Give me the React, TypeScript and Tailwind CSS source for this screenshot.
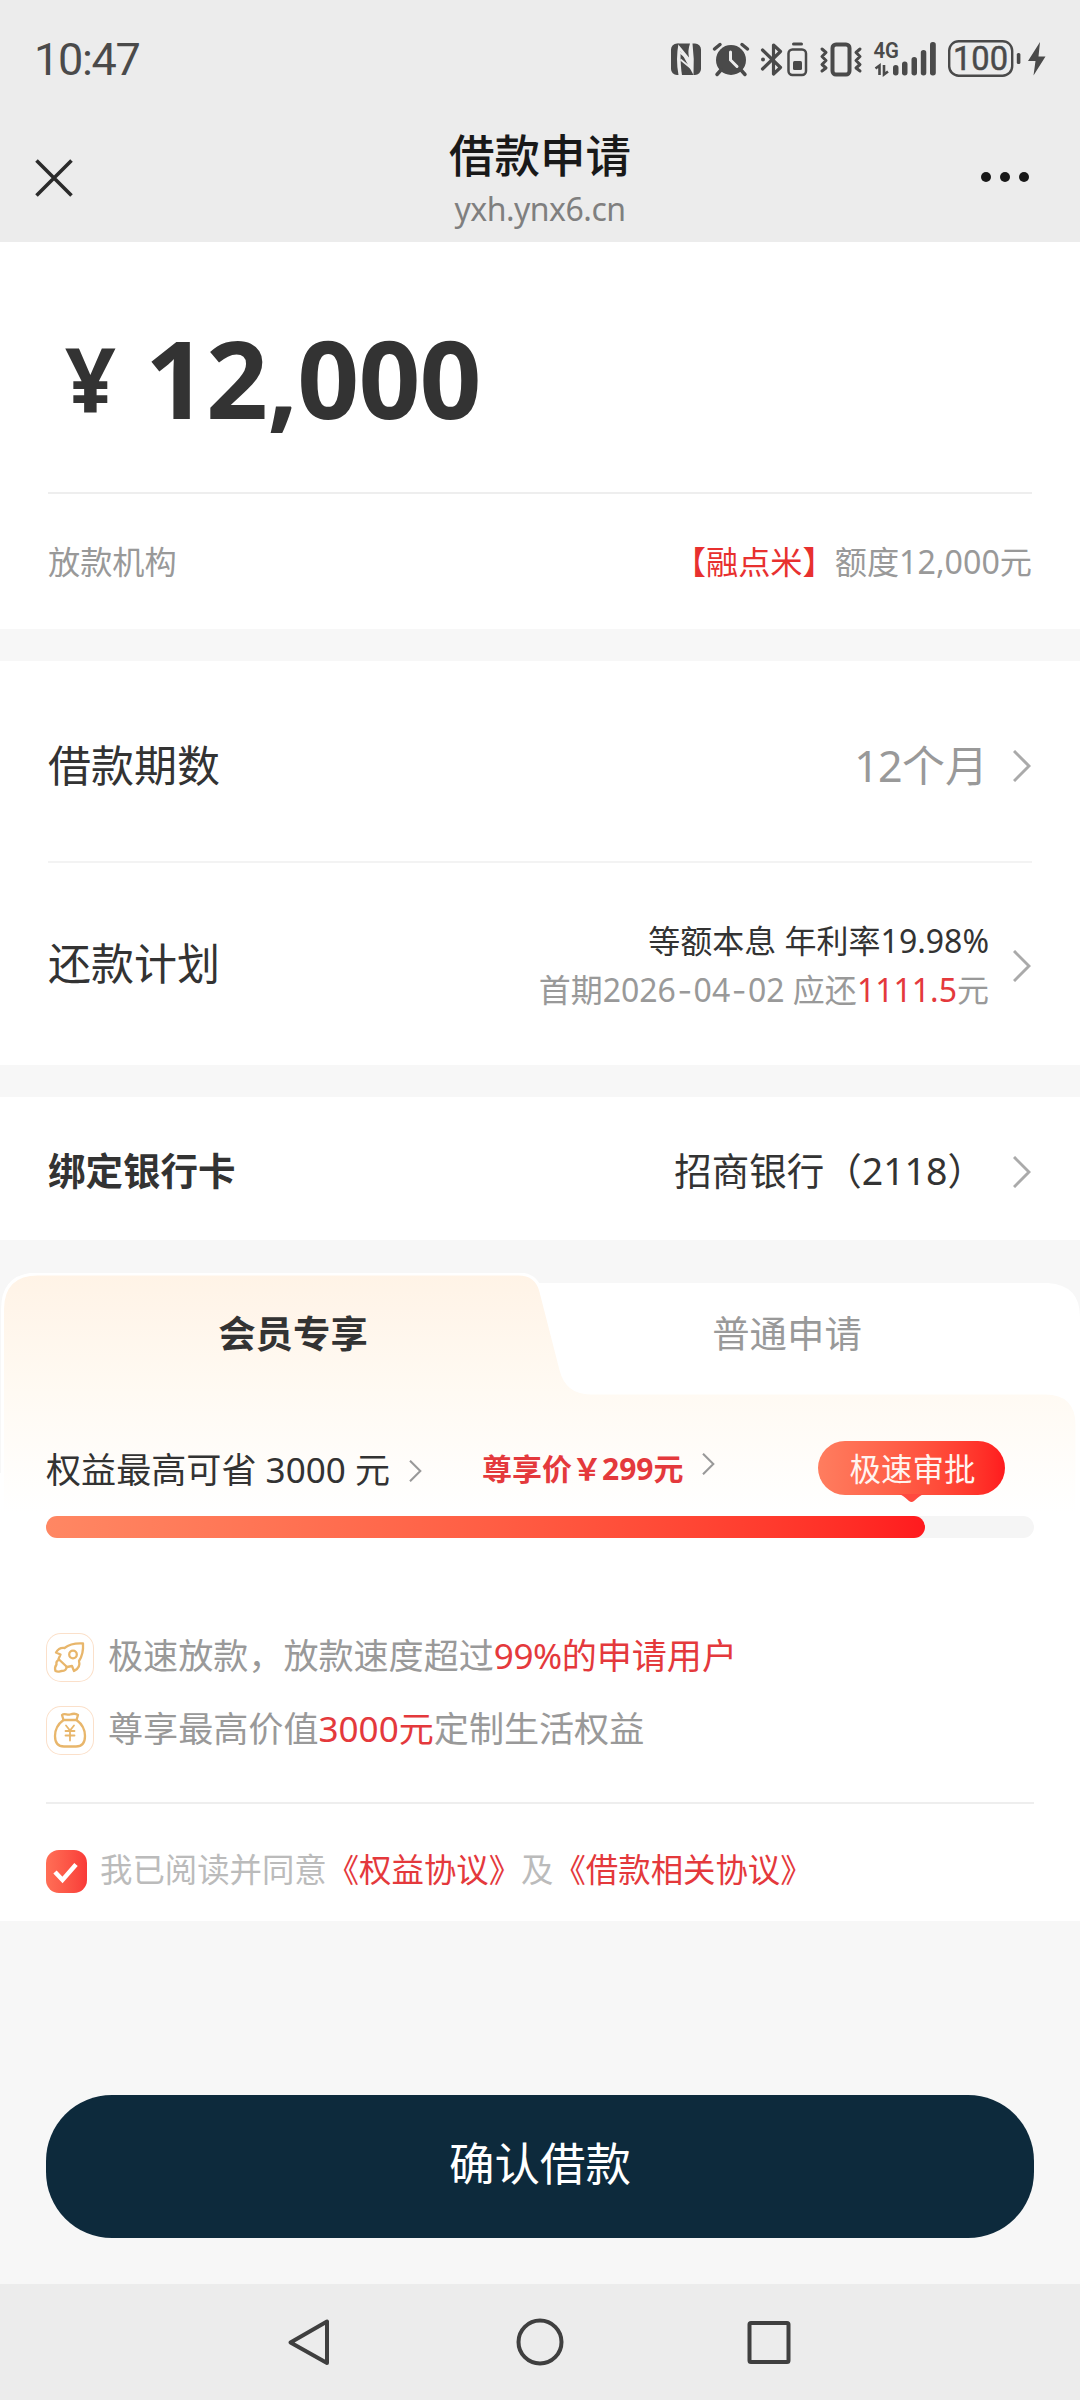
import React, { useState } from 'react';

const SANS =
  "font-['Noto_Sans','Noto_Sans_CJK_SC',sans-serif]";

interface ChevronProps {
  className: string;
  stroke?: number;
}

function Chevron({ className, stroke = 3 }: ChevronProps) {
  return (
    <svg viewBox="0 0 18 32" className={className} fill="none" stroke="currentColor" strokeWidth={stroke}>
      <path d="M1 1 L16 16 L1 31" />
    </svg>
  );
}

function Dash() {
  return <span className="px-[1.500px] font-[Inter]">-</span>;
}

function StatusIcons() {
  return (
    <svg width="380" height="44" viewBox="668 36 380 44" fill="#4a4a4a">
      {/* NFC */}
      <path d="M677 42.500h1.500q-3 16 0 31.500h-1.500a6 6 0 0 1-6-6v-19.500a6 6 0 0 1 6-6z" />
      <path d="M677.500 42.500h12.500q-2.500 7-1 14z" />
      <path d="M680.500 50q0 16 1.500 24h11.500z" />
      <path d="M692.500 42.500h2.500a6 6 0 0 1 6 6v19.500a6 6 0 0 1-6 6h-1.500q1-16-1-31.500z" />
      <path d="M679.500 51l12 10M680.500 58.500l11 9" stroke="#ececec" strokeWidth="1.800" />

      {/* alarm */}
      <circle cx="731" cy="59" r="15" />
      <path d="M714.500 48l5.500-4.500M747.500 48l-5.500-4.500M721 69l-4 4.500M741 69l4 4.500" stroke="#4a4a4a" strokeWidth="3.500" strokeLinecap="round" />
      <path d="M730.500 51v8l6.500 6.500" fill="none" stroke="#ececec" strokeWidth="3" strokeLinecap="round" />

      {/* bluetooth and its battery */}
      <path d="M762.500 49l18 17.500-7 6.500v-29l7 6.500-18 17.500" fill="none" stroke="#4a4a4a" strokeWidth="3.200" strokeLinejoin="round" strokeLinecap="round" />
      <circle cx="763" cy="58.500" r="2" />
      <rect x="788.500" y="48.500" width="17.500" height="25.500" rx="4" fill="none" stroke="#4a4a4a" strokeWidth="2.500" />
      <rect x="792" y="41.500" width="11" height="3" rx="1.500" />
      <rect x="793" y="60" width="9" height="9" rx="1.500" />

      {/* vibrate */}
      <rect x="832.500" y="43.500" width="17" height="30" rx="3.500" fill="none" stroke="#4a4a4a" strokeWidth="4" />
      <path d="M822 48l4 3.500-4 4 4 4-4 4 4 3.500-4 3M860 48l-4 3.500 4 4-4 4 4 4-4 3.500 4 3" fill="none" stroke="#4a4a4a" strokeWidth="3" strokeLinecap="round" strokeLinejoin="round" />

      {/* mobile signal */}
      <text x="873.500" y="57" fontSize="22" fontWeight="600" fontFamily="Roboto, sans-serif" textLength="25.500" lengthAdjust="spacingAndGlyphs">4G</text>
      <path d="M875.500 67.500l4-3v9.500M884 64v9.500l4-3" fill="none" stroke="#4a4a4a" strokeWidth="2.600" />
      <rect x="893" y="64" width="5.500" height="10.500" rx="2.700" />
      <rect x="902" y="60.500" width="5.500" height="14" rx="2.700" />
      <rect x="911.500" y="56" width="5.500" height="18.500" rx="2.700" />
      <rect x="920.800" y="49" width="5.500" height="25.500" rx="2.700" />
      <rect x="930" y="41" width="5.800" height="33.500" rx="2.700" />

      {/* battery */}
      <rect x="949.200" y="40.200" width="63" height="34.500" rx="9.500" fill="none" stroke="#4a4a4a" strokeWidth="2.400" />
      <text x="953" y="69" fontSize="32.500" fontWeight="400" fontFamily="Roboto, sans-serif" stroke="#4a4a4a" strokeWidth="0.500" textLength="55" lengthAdjust="spacingAndGlyphs">100</text>
      <rect x="1016.800" y="52" width="3.600" height="11" rx="1.500" />
      <path d="M1040 41l-12 19h7.500l-2 14.500 12-19h-7z" />
    </svg>
  );
}

function RocketIcon() {
  return (
    <svg viewBox="0 0 48 49" className="h-[49px] w-12" fill="none" stroke="#e8b66b" strokeWidth="2.300" strokeLinejoin="round" strokeLinecap="round">
      <path d="M37 10.500c-8-.5-14 1-18.500 4.500-3.500-.5-6.500 1-8.500 4.500l4.500 2-2 4.500 8.500 8 5-1 2 5c4-2 6.500-5 5-10 3-4.500 4.500-10 4-17.500z" />
      <circle cx="27" cy="21.500" r="3.800" />
      <path d="M12.500 27c-3 1.500-2 3-2 4.500-1.500 2-2 4-1 6.500 3 1.500 4.500 0 6 0 2.500 0 5-.5 5-4" />
    </svg>
  );
}

function MoneyBagIcon() {
  return (
    <svg viewBox="0 0 48 49" className="h-[49px] w-12" fill="none" stroke="#e8b66b" strokeWidth="2.300" strokeLinejoin="round" strokeLinecap="round">
      <path d="M17.500 14l-1.500-5c2.500-2.500 5 .5 8-.5s5.500-1.500 8 .5l-1.500 5z" />
      <path d="M17.500 14c-5.500 4-8.500 10-8.500 16 0 7 3 10.500 9 10.500h12c6 0 9-3.500 9-10.500 0-6-3-12-8.500-16" />
      <path d="M20 19.500l4 5 4-5M19.500 25h9M19.500 29.500h9M24 25v9.500" strokeWidth="1.800" />
    </svg>
  );
}

export default function App() {
  const [agreed, setAgreed] = useState(true);

  return (
    <div className={`flex h-[2400px] w-[1080px] flex-col overflow-hidden bg-[#f7f7f7] text-[#333] ${SANS}`}>
      {/* HEADER */}
      <header className="flex h-[242px] flex-col bg-[#ececec]">
        <div className="flex h-[118px] items-center justify-between pl-[34px] pr-[32px]">
          <span className="font-[Roboto] text-[45px] leading-none tracking-[-1.300px] text-[#4a4a4a]">10:47</span>
          <StatusIcons />
        </div>
        <div className="grid flex-1 grid-cols-[200px_1fr_200px]">
          <button className="flex pl-[35px] pt-[41px]">
            <svg width="38" height="38" viewBox="0 0 38 38" fill="none" stroke="#2b2b2b" strokeWidth="3.600">
              <path d="M1.500 1.500l35 35M36.500 1.500l-35 35" />
            </svg>
          </button>
          <div className="flex flex-col items-center pt-[13px]">
            <h1 className="text-[45.500px] font-medium leading-[48px] text-[#191919]">借款申请</h1>
            <span className="mt-2 text-[32px] leading-[44px] tracking-[-0.500px] text-[#7f7f7f]">yxh.ynx6.cn</span>
          </div>
          <button className="flex justify-end gap-[9px] pr-[51px] pt-[54px]">
            <i className="size-[10px] rounded-full bg-[#191919]" />
            <i className="size-[10px] rounded-full bg-[#191919]" />
            <i className="size-[10px] rounded-full bg-[#191919]" />
          </button>
        </div>
      </header>

      {/* AMOUNT */}
      <section className="h-[387px] bg-white px-12">
        <div className="flex h-[252px] items-start border-b-2 border-[#eee] pl-[17px] pt-[66px] font-bold leading-[138px]">
          <span className="pt-[2px] text-[89px]">¥</span>
          <span className="ml-[29px] text-[108.500px] tracking-[-0.900px]">12,000</span>
        </div>
        <div className="flex h-[135px] items-center justify-between pt-[2px] text-[32.200px] text-[#999]">
          <span>放款机构</span>
          <span>
            <span className="text-[#e8302f]">【融点米】</span>额度12,000元
          </span>
        </div>
      </section>

      {/* TERMS */}
      <section className="mt-8 h-[404px] bg-white px-12">
        <div className="flex h-[202px] items-center border-b-2 border-[#f3f3f3] pt-[10px]">
          <span className="flex-1 text-[43px]">借款期数</span>
          <span className="text-[43px] text-[#999]">
            <span className="tracking-[-0.700px]">12</span>个月
          </span>
          <Chevron className="ml-[25px] mr-px h-8 w-[18px] text-[#aaa]" />
        </div>
        <div className="flex h-[202px] items-center pt-1">
          <span className="-mt-[3px] flex-1 text-[43px]">还款计划</span>
          <div className="-mt-[2px] text-right text-[32px] leading-[49px]">
            <p>等额本息 年利率19.98%</p>
            <p className="text-[#999]">
              首期2026<Dash />04<Dash />02 应还<span className="text-[#e4393c]">1111.5</span>元
            </p>
          </div>
          <Chevron className="ml-[24px] mr-px h-8 w-[18px] text-[#aaa]" />
        </div>
      </section>

      {/* BANK CARD */}
      <section className="mt-8 flex h-[143px] items-center bg-white px-12 pt-[6px]">
        <span className="flex-1 text-[37.500px] font-bold">绑定银行卡</span>
        <span className="text-[37.500px]">招商银行（2118）</span>
        <Chevron className="ml-[28px] mr-px h-8 w-[18px] text-[#aaa]" />
      </section>

      {/* MEMBERSHIP */}
      <section className="relative mt-[33px] h-[648px]">
        <svg className="absolute inset-0" width="1080" height="648" viewBox="0 0 1080 648">
          <defs>
            <linearGradient id="cream" x1="0" y1="0" x2="0" y2="240" gradientUnits="userSpaceOnUse">
              <stop offset="0" stopColor="#fff3e6" />
              <stop offset="0.5" stopColor="#fffaf3" />
              <stop offset="1" stopColor="#fff" />
            </linearGradient>
          </defs>
          <path d="M500 10H1048Q1080 12 1080 44V648H0V200H500Z" fill="#fff" />
          <path
            d="M2.500 648V36Q3 1 38 1H518Q537 1 541 19L561 97Q567 120 590 120H1045Q1077 120 1077 152V648Z"
            fill="url(#cream)"
            stroke="#fff"
            strokeWidth="3"
          />
        </svg>

        <div className="relative flex h-[120px] text-[37.400px]">
          <span className="w-[586px] text-center font-bold leading-[122px]">会员专享</span>
          <span className="w-[402px] text-center leading-[122px] text-[#999]">普通申请</span>
        </div>

        <div className="relative px-[46px]">
          <div className="flex h-[123px] items-start pt-[48px]">
            <span className="whitespace-pre pt-[2px] text-[35.100px] leading-[52px]">权益最高可省 3000 元</span>
            <Chevron className="ml-[19px] mt-[19px] h-[22px] w-[13px] text-[#999]" />
            <span className="ml-[60px] pt-[2px] text-[30px] font-bold leading-[52px] text-[#e4393c]">尊享价￥299元</span>
            <Chevron className="ml-[18px] mt-3 h-[22px] w-[13px] text-[#999]" />
            <div className="relative ml-auto mr-[29px] h-[54px] w-[187px] rounded-full bg-linear-to-r from-[#ff7d5f] to-[#ff1a1e] pl-[2px] text-center text-[31.500px] leading-[55px] text-[#fff4f0]">
              极速审批
              <svg className="absolute left-[81px] top-[53px]" width="25" height="9" viewBox="0 0 25 9" fill="#ff4a3f">
                <path d="M0 0Q3 .5 10 7Q12.500 9 15 7Q22 .5 25 0Z" />
              </svg>
            </div>
          </div>

          <div className="h-[22px] rounded-full bg-[#f5f5f5]">
            <div className="h-full w-[879px] rounded-full bg-linear-to-r from-[#ff8763] to-[#ff1a1e]" />
          </div>

          <ul className="mt-[95px] flex h-[171px] flex-col gap-6 border-b-2 border-[#eee] text-[35.100px] leading-[49px] text-[#999]">
            <li className="flex gap-[14px]">
              <span className="size-12 h-[49px] rounded-[15px] shadow-[inset_0_0_0_1px_#fbe0ca]">
                <RocketIcon />
              </span>
              <span className="-mt-[2px]">
                极速放款，放款速度超过
                <span className="text-[#e4393c]">
                  <span className="tracking-[-0.500px]">99%</span>的申请用户
                </span>
              </span>
            </li>
            <li className="flex gap-[14px]">
              <span className="size-12 h-[49px] rounded-[15px] shadow-[inset_0_0_0_1px_#fbe0ca]">
                <MoneyBagIcon />
              </span>
              <span className="-mt-[2px]">
                尊享最高价值<span className="text-[#e4393c]">3000元</span>定制生活权益
              </span>
            </li>
          </ul>

          <div className="flex items-center pt-[46px] text-[32.400px] leading-[43px] text-[#bbb]">
            <button
              onClick={() => setAgreed(!agreed)}
              className="mr-[13px] h-[43px] w-[41px] rounded-[13px] bg-linear-to-r from-[#ff6e56] to-[#f93a38]"
            >
              {agreed && (
                <svg viewBox="0 0 41 43" fill="none" stroke="#fff" strokeWidth="4.500">
                  <path d="M9 22l7.500 8L30 14.500" />
                </svg>
              )}
            </button>
            <p className="-mt-1">
              我已阅读并同意<span className="text-[#e4393c]">《权益协议》</span>及
              <span className="text-[#e4393c]">《借款相关协议》</span>
            </p>
          </div>
        </div>
      </section>

      {/* SUBMIT */}
      <button className="mx-[46px] mt-[174px] h-[143px] rounded-[66px] bg-[#0d2a3c] pb-[6px] text-[45.500px] text-white">
        确认借款
      </button>

      {/* SYSTEM NAV */}
      <nav className="mt-auto h-[116px] bg-[#ececec]">
        <svg width="1080" height="116" fill="none" stroke="#3f3f3f" strokeWidth="4" strokeLinejoin="round">
          <path d="M327 37.500v41.500L290.500 58.500Z" />
          <circle cx="540" cy="58" r="21.500" />
          <rect x="749.500" y="39" width="39" height="39" rx="1.500" />
        </svg>
      </nav>
    </div>
  );
}
